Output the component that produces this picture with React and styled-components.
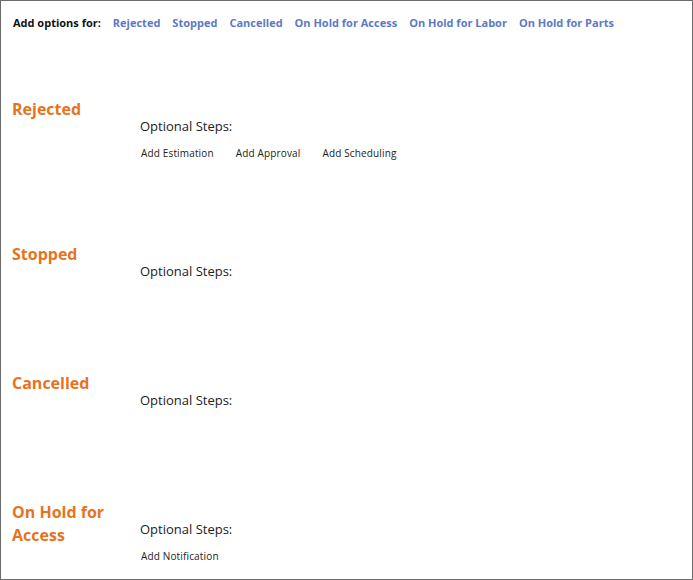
import React from "react";
import styled, { createGlobalStyle } from "styled-components";

const GlobalStyle = createGlobalStyle`
  html, body {
    margin: 0;
    padding: 0;
    background: #fff;
  }
  body {
    font-family: "Open Sans", "Liberation Sans", sans-serif;
    color: #222;
  }
`;

const Frame = styled.div`
  box-sizing: border-box;
  width: 693px;
  height: 580px;
  border: 1px solid #6b6b6b;
  overflow: hidden;
`;

const OptionsBar = styled.div`
  display: flex;
  align-items: center;
  gap: 12px;
  padding: 14px 12px 0 12px;
  font-size: 11px;
  font-weight: 700;
  line-height: 16px;
`;

const BarLabel = styled.span`
  color: #111;
`;

const BarLink = styled.a`
  color: #5b7ac4;
  text-decoration: none;
  cursor: pointer;
`;

const Sections = styled.div`
  padding-top: 67px;
`;

const Section = styled.section`
  display: grid;
  grid-template-columns: 128px 1fr;
  padding: 0 11px 82px 11px;
`;

const Title = styled.h2`
  margin: 0;
  font-size: 16px;
  font-weight: 700;
  line-height: 23px;
  color: #e8731e;
`;

const Content = styled.div`
  padding-top: 19px;
`;

const StepsLabel = styled.div`
  font-size: 13px;
  line-height: 18px;
  color: #222;
  margin-bottom: 10px;
`;

const StepList = styled.div`
  display: flex;
  gap: 22px;
  padding-left: 1px;
`;

const StepButton = styled.span`
  font-size: 10px;
  line-height: 16px;
  letter-spacing: 0.15px;
  color: #222;
  cursor: pointer;
`;

const statuses = [
  { name: "Rejected", steps: ["Add Estimation", "Add Approval", "Add Scheduling"] },
  { name: "Stopped", steps: [] },
  { name: "Cancelled", steps: [] },
  { name: "On Hold for Access", title: ["On Hold for", "Access"], steps: ["Add Notification"] },
  { name: "On Hold for Labor", steps: [] },
  { name: "On Hold for Parts", steps: [] },
];

// only the first four sections fit in the visible frame
const visible = statuses.slice(0, 4);

export default function App() {
  return (
    <>
      <GlobalStyle />
      <Frame>
        <OptionsBar>
          <BarLabel>Add options for:</BarLabel>
          {statuses.map((s) => (
            <BarLink key={s.name}>{s.name}</BarLink>
          ))}
        </OptionsBar>
        <Sections>
          {visible.map((s) => (
            <Section key={s.name}>
              <Title>
                {s.title ? (
                  <>
                    {s.title[0]}
                    <br />
                    {s.title[1]}
                  </>
                ) : (
                  s.name
                )}
              </Title>
              <Content>
                <StepsLabel>Optional Steps:</StepsLabel>
                {s.steps.length > 0 && (
                  <StepList>
                    {s.steps.map((step) => (
                      <StepButton key={step}>{step}</StepButton>
                    ))}
                  </StepList>
                )}
              </Content>
            </Section>
          ))}
        </Sections>
      </Frame>
    </>
  );
}
